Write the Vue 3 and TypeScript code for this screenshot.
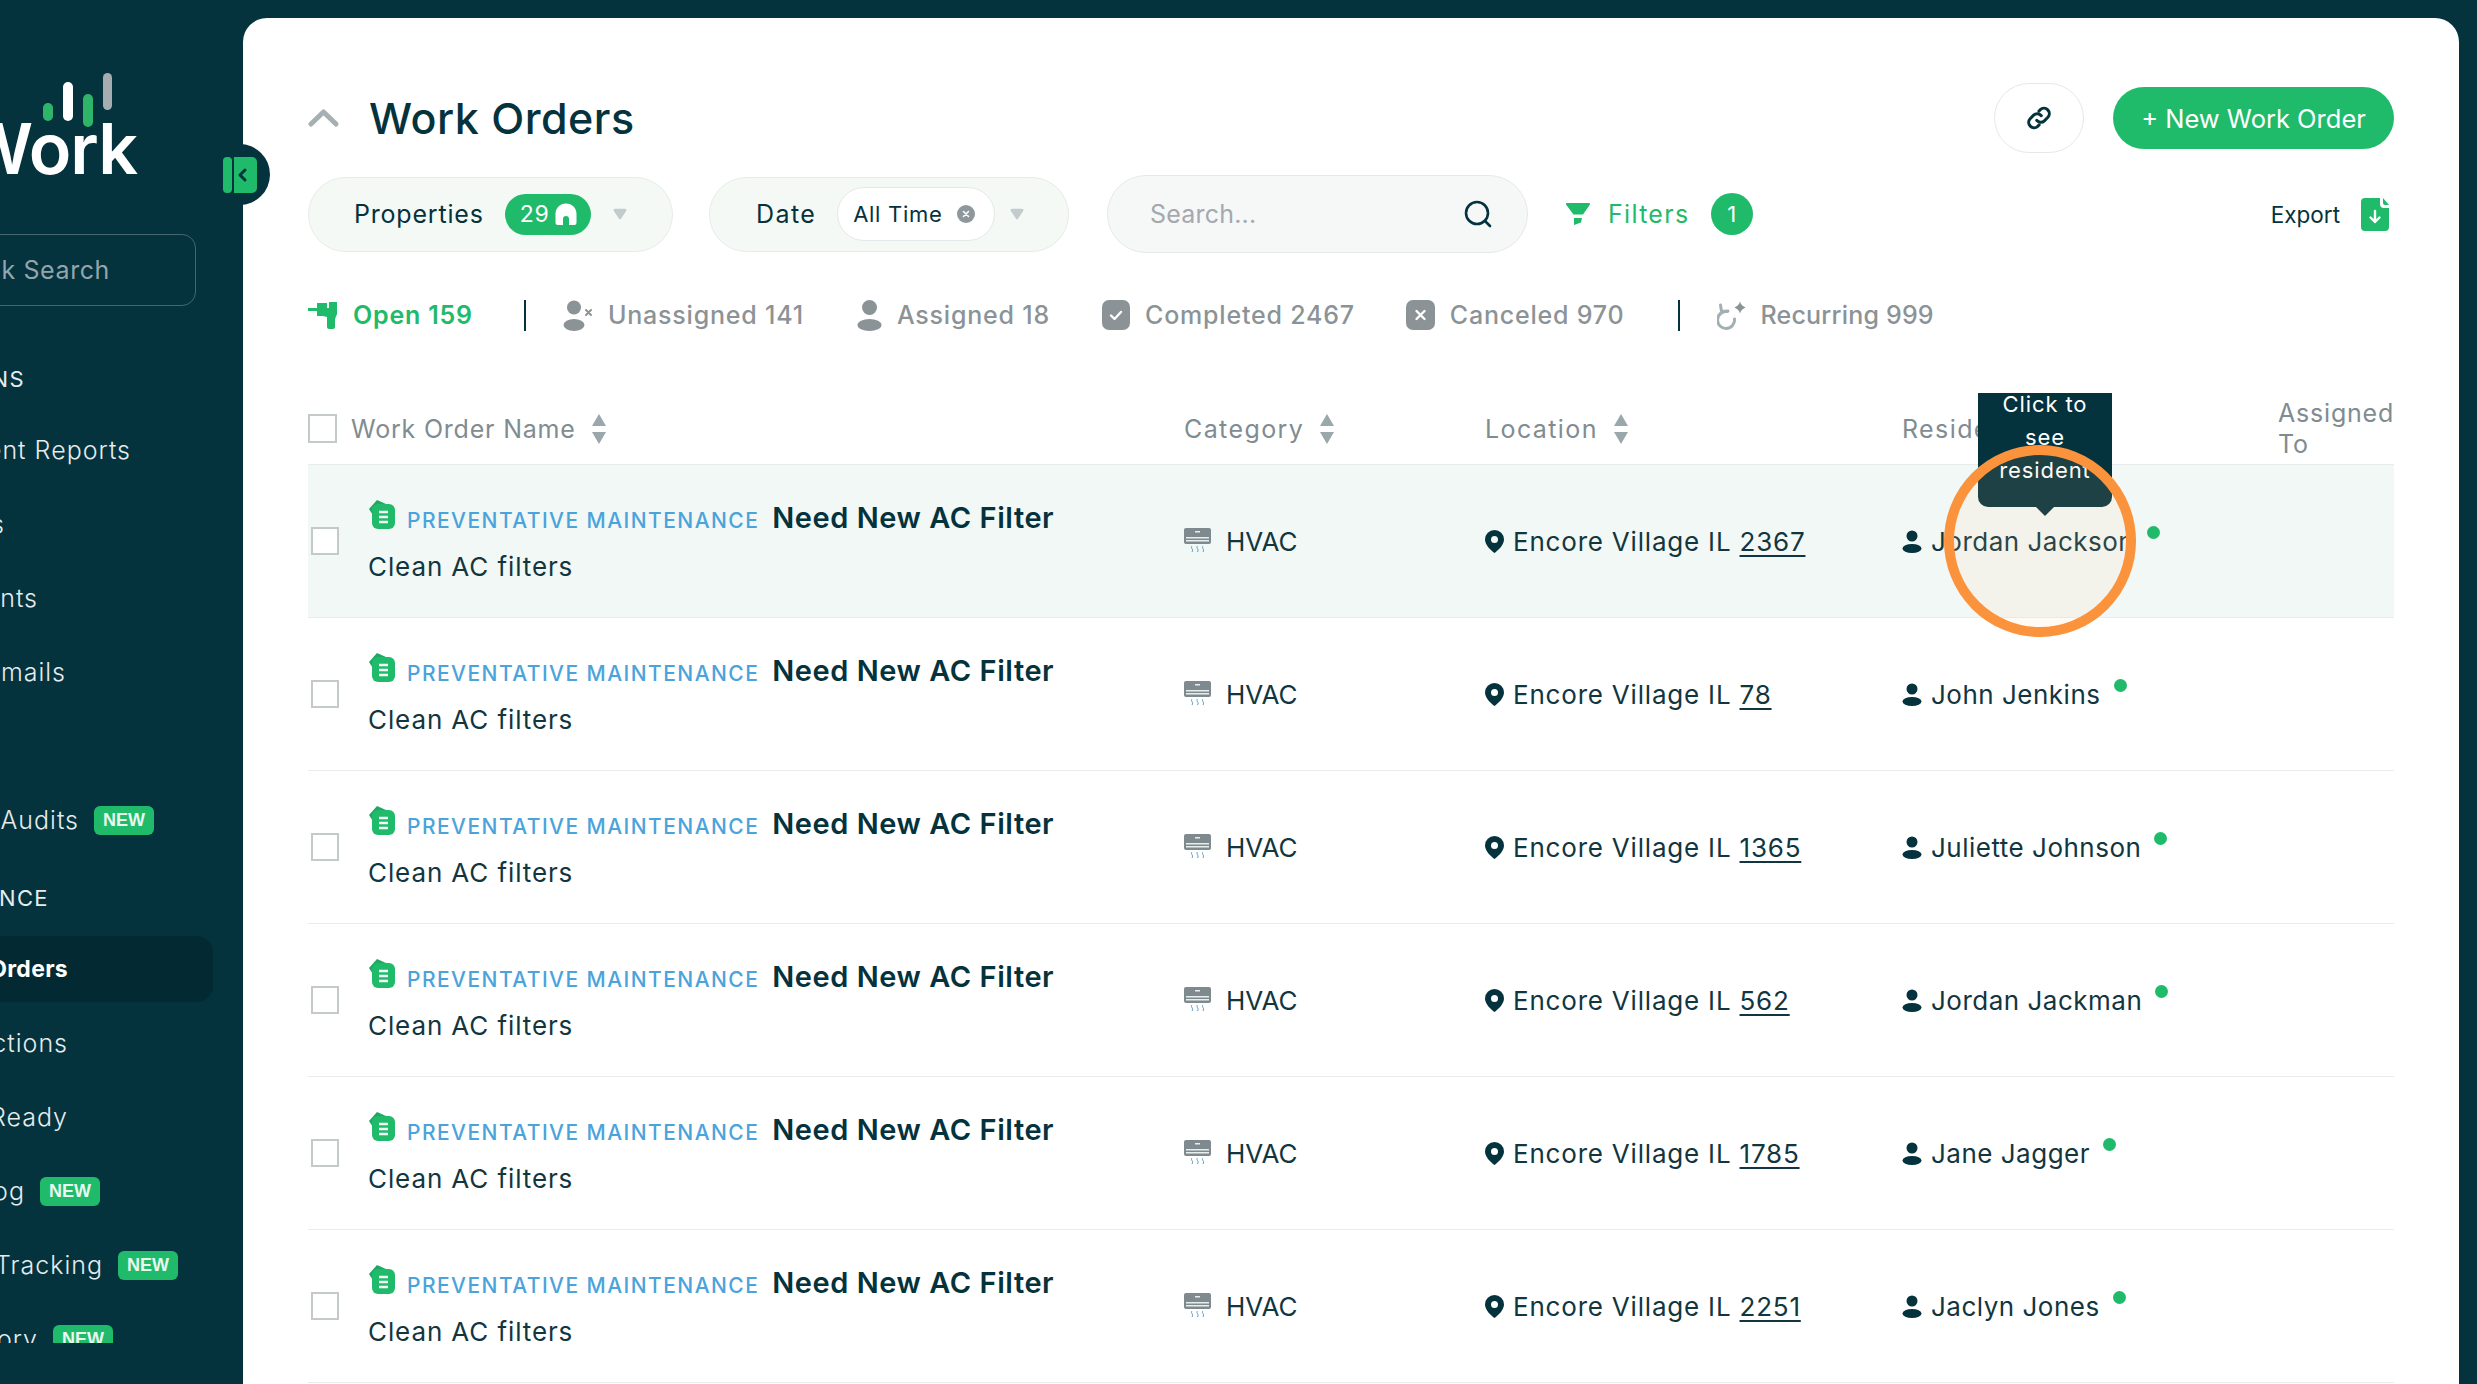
<template>
  <div class="shell">
    <aside class="sidebar">
      <div class="logo">
        <svg class="logo__bars" width="70" height="54" viewBox="0 0 70 54">
          <rect x="0" y="30" width="10" height="18" rx="5" fill="#2fb56a" />
          <rect x="20" y="9" width="10" height="39" rx="5" fill="#fff" />
          <rect x="40" y="21" width="10" height="33" rx="5" fill="#2fb56a" />
          <rect x="60" y="0" width="9" height="37" rx="4.5" fill="#a5adb1" />
        </svg>
        <div class="logo__word">Work</div>
      </div>

      <div class="quick">
        <span>Quick Search</span>
      </div>

      <nav class="nav">
        <template v-for="item in NAV" :key="item.label">
          <div v-if="item.spacer" class="nav__spacer" />
          <div
            class="nav__item"
            :class="{ 'nav__item--head': item.head, 'nav__item--active': item.active }"
          >
            <div class="nav__clip" :style="{ width: item.end + 'px' }">
              <span>{{ item.label }}</span>
            </div>
            <span v-if="item.isNew" class="nav__new">NEW</span>
          </div>
        </template>
      </nav>
    </aside>

    <!-- collapse toggle sits half over the card -->
    <div class="collapse">
      <svg width="34" height="36" viewBox="0 0 34 36">
        <rect x="0" y="0" width="9" height="36" rx="4" fill="#1fbb6a" />
        <path d="M11 0h18a5 5 0 0 1 5 5v26a5 5 0 0 1-5 5H11z" fill="#1fbb6a" />
        <path d="M22 13l-5 5 5 5" fill="none" stroke="#04323d" stroke-width="3" stroke-linecap="round" stroke-linejoin="round" />
      </svg>
    </div>

    <main class="card">
      <header class="title-row">
        <svg class="title-row__chev" width="31" height="18" viewBox="0 0 31 18">
          <path d="M3 15L15.5 3 28 15" fill="none" stroke="#a6afb2" stroke-width="5" stroke-linecap="round" stroke-linejoin="round" />
        </svg>
        <h1>Work Orders</h1>
        <button class="link-btn">
          <svg width="28" height="28" viewBox="0 0 24 24" fill="none" stroke="#04323d" stroke-width="2.6" stroke-linecap="round" stroke-linejoin="round">
            <path d="M10 14a4.5 4.5 0 0 0 6.6.4l3-3a4.6 4.6 0 0 0-6.5-6.5l-1.2 1.2" />
            <path d="M14 10a4.5 4.5 0 0 0-6.6-.4l-3 3a4.6 4.6 0 0 0 6.5 6.5l1.2-1.2" />
          </svg>
        </button>
        <button class="new-btn">+ New Work Order</button>
      </header>

      <div class="toolbar">
        <div class="pill pill--props">
          <span>Properties</span>
          <span class="count">
            29
            <svg width="24" height="24" viewBox="0 0 24 24"><path d="M12 1.500C6 1.500 1.500 6 1.500 12v8.500a2.500 2.500 0 0 0 2.500 2.500H9v-6a3 3 0 0 1 6 0v6h5a2.500 2.500 0 0 0 2.500-2.500V12C22.500 6 18 1.500 12 1.500z" fill="#fff" /></svg>
          </span>
          <svg class="caret" width="14" height="12" viewBox="0 0 16 14"><path d="M2 1h12a1.500 1.500 0 0 1 1.200 2.400L9.200 12.500a1.500 1.500 0 0 1-2.400 0L.8 3.400A1.500 1.500 0 0 1 2 1z" fill="#c3cccc" /></svg>
        </div>
        <div class="pill pill--date">
          <span>Date</span>
          <span class="chip">
            All Time
            <svg width="18" height="18" viewBox="0 0 18 18"><circle cx="9" cy="9" r="9" fill="#8e989c" /><path d="M6.500 6.500l5 5M11.500 6.500l-5 5" stroke="#fff" stroke-width="1.600" stroke-linecap="round" /></svg>
          </span>
          <svg class="caret" width="14" height="12" viewBox="0 0 16 14"><path d="M2 1h12a1.500 1.500 0 0 1 1.200 2.400L9.200 12.500a1.500 1.500 0 0 1-2.400 0L.8 3.400A1.500 1.500 0 0 1 2 1z" fill="#c3cccc" /></svg>
        </div>
        <div class="search">
          <span>Search...</span>
          <svg width="32" height="32" viewBox="0 0 32 32" fill="none" stroke="#04323d" stroke-width="2.600" stroke-linecap="round"><circle cx="15" cy="15" r="11" /><path d="M23 23l5 5" /></svg>
        </div>
        <div class="filters">
          <svg width="26" height="24" viewBox="0 0 26 24" fill="#1fbb6a"><path d="M2 1h22c1 0 1.400 1 .8 1.700L18 12.500H8.500L1.200 2.700C.6 2 1 1 2 1z" /><path d="M9 16h8l-1 4.500-7 2.500z" /></svg>
          <span>Filters</span>
          <span class="filters__n">1</span>
        </div>
        <div class="export">
          <span>Export</span>
          <svg width="28" height="33" viewBox="0 0 28 33"><path d="M4 0h15v6a4 4 0 0 0 4 4h5v19a4 4 0 0 1-4 4H4a4 4 0 0 1-4-4V4a4 4 0 0 1 4-4z" fill="#1fbb6a" /><path d="M22 0l6 7h-4a2 2 0 0 1-2-2z" fill="#1fbb6a" /><path d="M14 13v11M9.500 19.500L14 24l4.500-4.500" fill="none" stroke="#fff" stroke-width="2.400" stroke-linecap="round" stroke-linejoin="round" /></svg>
        </div>
      </div>

      <div class="tabs">
        <div class="tab tab--open">
          <svg width="30" height="30" viewBox="0 0 30 30" fill="#1fbb6a"><rect x="0" y="8" width="10" height="3" /><path d="M9 3h10v5h2V2h8v12l-2 5v8a2 2 0 0 1-2 2h-4a2 2 0 0 1-2-2V17l-4-1H9z" /></svg>
          <span>Open 159</span>
        </div>
        <i class="tabs__sep" />
        <div class="tab tab--unassigned">
          <svg width="30" height="32" viewBox="0 0 30 32"><circle cx="11" cy="8.500" r="7" fill="#8b9396" /><ellipse cx="11" cy="26" rx="10.500" ry="6" fill="#8b9396" /><path d="M23 11l5 5M28 11l-5 5" stroke="#8b9396" stroke-width="2" stroke-linecap="round" /></svg>
          <span>Unassigned 141</span>
        </div>
        <div class="tab tab--assigned">
          <svg width="25" height="32" viewBox="0 0 25 32"><circle cx="12.500" cy="8.500" r="7.500" fill="#8b9396" /><ellipse cx="12.500" cy="26" rx="12" ry="6" fill="#8b9396" /></svg>
          <span>Assigned 18</span>
        </div>
        <div class="tab tab--completed">
          <svg width="28" height="30" viewBox="0 0 28 30"><rect width="28" height="30" rx="7" fill="#8b9396" /><path d="M9 15.500l3.500 3.500 6.500-7" fill="none" stroke="#fff" stroke-width="2.400" stroke-linecap="round" stroke-linejoin="round" /></svg>
          <span>Completed 2467</span>
        </div>
        <div class="tab tab--canceled">
          <svg width="29" height="30" viewBox="0 0 29 30"><rect width="29" height="30" rx="7" fill="#8b9396" /><path d="M10.500 11l8 8M18.500 11l-8 8" stroke="#fff" stroke-width="2.400" stroke-linecap="round" /></svg>
          <span>Canceled 970</span>
        </div>
        <i class="tabs__sep tabs__sep--2" />
        <div class="tab tab--recurring">
          <svg width="29" height="30" viewBox="0 0 29 30" fill="none"><path d="M10 11.500A8.500 8.500 0 1 0 17.500 19" stroke="#a3b0b3" stroke-width="3" stroke-linecap="round" /><path d="M3.500 5l1 6.500 6.500-.5" stroke="#a3b0b3" stroke-width="3" stroke-linecap="round" stroke-linejoin="round" /><path d="M23 1.500c.8 2.800 2.200 4.600 5.500 6-3.300 1.400-4.700 3.200-5.500 6-.8-2.800-2.200-4.600-5.500-6 3.300-1.400 4.700-3.200 5.500-6z" fill="#8b9396" /></svg>
          <span>Recurring 999</span>
        </div>
      </div>

      <section class="table">
        <div class="grid head">
          <div class="head__name">
            <span class="box box--head" />
            <span>Work Order Name</span>
            <svg class="sort" width="14" height="30" viewBox="0 0 14 30"><path d="M7 0l7 12H0zM7 30l7-12H0z" fill="#9aa7ab" /></svg>
          </div>
          <div class="head__cell head__cell--wide">
            <span>Category</span>
            <svg class="sort" width="14" height="30" viewBox="0 0 14 30"><path d="M7 0l7 12H0zM7 30l7-12H0z" fill="#9aa7ab" /></svg>
          </div>
          <div class="head__cell head__cell--wide">
            <span>Location</span>
            <svg class="sort" width="14" height="30" viewBox="0 0 14 30"><path d="M7 0l7 12H0zM7 30l7-12H0z" fill="#9aa7ab" /></svg>
          </div>
          <div class="head__cell head__cell--wide">Resident</div>
          <div class="head__cell head__cell--wrap">Assigned To</div>
        </div>

        <div v-for="(row, i) in ROWS" :key="row.unit" class="grid row" :class="{ 'row--hover': i === 0 }">
          <div class="row__name">
            <span class="box" />
            <div class="row__text">
              <div class="row__top">
                <svg class="row__icon" width="27" height="30" viewBox="0 0 27 30">
                  <path d="M1 10L9 1l9 4-10 16z" fill="#1fa862" />
                  <rect x="4" y="5" width="23" height="25" rx="6" fill="#1fbb6a" />
                  <path d="M11 13h9M11 18h9M11 23h9" stroke="#f2f8f5" stroke-width="2.400" />
                </svg>
                <span class="row__kind">PREVENTATIVE MAINTENANCE</span>
                <span class="row__title">Need New AC Filter</span>
              </div>
              <div class="row__desc">Clean AC filters</div>
            </div>
          </div>
          <div class="row__cell row__cell--cat">
            <svg class="row__hvac" width="27" height="26" viewBox="0 0 27 26">
              <rect width="27" height="16" rx="2" fill="#7f8a8e" />
              <rect x="2" y="9" width="23" height="1.500" fill="#e8eded" />
              <rect x="2" y="12" width="23" height="1.500" fill="#e8eded" />
              <rect x="11" y="3" width="5" height="1.500" fill="#e8eded" />
              <path d="M8 18c-2 2 2 3 0 6M13.500 18c-2 2 2 3 0 6M19 18c-2 2 2 3 0 6" fill="none" stroke="#5d9dc4" stroke-width="1" />
            </svg>
            <span>HVAC</span>
          </div>
          <div class="row__cell row__cell--loc">
            <svg width="19" height="23" viewBox="0 0 19 23"><path fill-rule="evenodd" d="M9.500 0A9.500 9.500 0 0 0 0 9.500C0 15 6 20.500 9.500 23 13 20.500 19 15 19 9.500A9.500 9.500 0 0 0 9.500 0zm0 6a3.500 3.500 0 1 1 0 7 3.500 3.500 0 0 1 0-7z" fill="#04323d" /></svg>
            <span>Encore Village IL <u>{{ row.unit }}</u></span>
          </div>
          <div class="row__cell row__cell--res">
            <svg width="20" height="23" viewBox="0 0 20 23"><circle cx="10" cy="6" r="5.500" fill="#04323d" /><ellipse cx="10" cy="18.500" rx="9.500" ry="4.500" fill="#04323d" /></svg>
            <span>{{ row.resident }}</span>
            <i class="row__dot" />
          </div>
          <div />
        </div>

        <!-- hover tooltip and the tutorial's highlight ring -->
        <div class="tip">
          <div class="tip__body">
            <p>Click to see resident</p>
          </div>
          <i class="tip__arrow" />
        </div>
        <div class="ring" />
      </section>
    </main>
  </div>
</template>

<script setup lang="ts">
interface NavItem {
  label: string
  end: number // x where the label ends, the sidebar is scrolled so the start is cut off
  head?: boolean
  active?: boolean
  isNew?: boolean
  spacer?: boolean
}

const NAV: NavItem[] = [
  { label: 'OPERATIONS', end: 25, head: true },
  { label: 'Incident Reports', end: 131 },
  { label: 'Tasks', end: 5 },
  { label: 'Residents', end: 38 },
  { label: 'Emails', end: 66 },
  { label: 'Property Audits', end: 79, isNew: true, spacer: true },
  { label: 'MAINTENANCE', end: 49, head: true },
  { label: 'Work Orders', end: 68, active: true },
  { label: 'Inspections', end: 68 },
  { label: 'Make Ready', end: 68 },
  { label: 'Work Log', end: 25, isNew: true },
  { label: 'Time Tracking', end: 103, isNew: true },
  { label: 'Inventory', end: 38, isNew: true },
]

const ROWS = [
  { unit: '2367', resident: 'Jordan Jackson' },
  { unit: '78', resident: 'John Jenkins' },
  { unit: '1365', resident: 'Juliette Johnson' },
  { unit: '562', resident: 'Jordan Jackman' },
  { unit: '1785', resident: 'Jane Jagger' },
  { unit: '2251', resident: 'Jaclyn Jones' },
]
</script>

<style>
html, body {
  margin: 0;
  height: 1384px;
  overflow: hidden;
  background: #04323d;
}
</style>

<style scoped>
.shell {
  position: relative;
  display: flex;
  width: 2477px;
  height: 1384px;
  overflow: hidden;
  background: #04323d;
  font-family: Inter, "Noto Sans", sans-serif;
  color: #04323d;
}

/* sidebar */
.sidebar {
  flex: 0 0 243px;
  width: 243px;
  overflow: hidden;
}
.logo {
  display: flex;
  flex-direction: column;
  padding-top: 73px;
}
.logo__bars { margin-left: 43px; }
.logo__word {
  display: flex;
  justify-content: flex-end;
  width: 137px;
  margin-top: -11px;
  font-size: 70px;
  line-height: 66px;
  font-weight: 600;
  letter-spacing: -1px;
  color: #fff;
  white-space: nowrap;
}
.quick {
  display: flex;
  justify-content: flex-end;
  align-items: center;
  box-sizing: border-box;
  width: 216px;
  height: 72px;
  margin: 52px 0 0 -20px;
  padding-right: 85px;
  border: 1px solid #47676e;
  border-radius: 14px;
  font-size: 25px;
  letter-spacing: 0.6px;
  color: #93a5aa;
  white-space: nowrap;
}
.nav {
  display: flex;
  flex-direction: column;
  height: 998px;
  margin-top: 39px;
  overflow: hidden;
  color: #e4ecee;
  font-size: 25px;
  font-weight: 300;
  letter-spacing: 1px;
}
.nav__spacer { flex: 0 0 74px; }
.nav__item {
  flex: 0 0 66px;
  display: flex;
  align-items: center;
  margin: 4px 0;
  white-space: nowrap;
}
.nav__item--head {
  flex-basis: 68px;
  margin: 0;
  font-size: 22px;
  font-weight: 400;
  letter-spacing: 1.4px;
}
.nav__spacer + .nav__item { margin-bottom: 11px; }
.nav__item--active {
  width: 213px;
  border-radius: 0 16px 16px 0;
  background: #032a33;
  font-size: 23px;
  font-weight: 700;
  letter-spacing: 0.3px;
  color: #fff;
}
.nav__clip {
  display: flex;
  justify-content: flex-end;
}
.nav__new {
  box-sizing: border-box;
  width: 60px;
  margin-left: 15px;
  height: 29px;
  line-height: 29px;
  text-align: center;
  border-radius: 6px;
  background: #1fbb6a;
  color: #e9f7ef;
  font-family: "Liberation Sans", sans-serif;
  font-size: 18px;
  font-weight: 700;
  letter-spacing: 0;
}

.collapse {
  position: absolute;
  left: 209px;
  top: 144px;
  z-index: 3;
  display: flex;
  align-items: center;
  justify-content: center;
  box-sizing: border-box;
  width: 61px;
  height: 61px;
  border-radius: 50%;
  background: #04323d;
}

/* card */
.card {
  flex: 0 0 2216px;
  box-sizing: border-box;
  width: 2216px;
  height: 1366px;
  margin-top: 18px;
  padding: 65px 65px 0;
  border-radius: 24px 24px 0 0;
  background: #fff;
  overflow: hidden;
}
.title-row {
  display: flex;
  align-items: center;
  height: 70px;
}
.title-row__chev { margin-right: 30px; }
.title-row h1 {
  margin: 0;
  font-size: 43px;
  font-weight: 500;
  letter-spacing: 0.5px;
}
.link-btn {
  display: flex;
  align-items: center;
  justify-content: center;
  width: 90px;
  height: 70px;
  margin-left: auto;
  padding: 0;
  border: 1px solid #e4e8e8;
  border-radius: 35px;
  background: #fff;
}
.new-btn {
  width: 281px;
  height: 62px;
  margin-left: 29px;
  border: 0;
  border-radius: 31px;
  background: #1fbb6a;
  color: #fff;
  font: 400 25.500px Inter, sans-serif;
}

.toolbar {
  display: flex;
  align-items: center;
  height: 78px;
  margin-top: 22px;
}
.pill {
  display: flex;
  align-items: center;
  box-sizing: border-box;
  height: 75px;
  border: 1px solid #e3ece8;
  border-radius: 38px;
  background: #f4f9f6;
  font-size: 25px;
  letter-spacing: 0.8px;
}
.pill--props {
  width: 365px;
  padding-left: 45px;
}
.count {
  display: flex;
  align-items: center;
  justify-content: space-between;
  box-sizing: border-box;
  width: 86px;
  height: 41px;
  margin-left: 21px;
  padding: 0 13px 0 15px;
  border-radius: 21px;
  background: #1fbb6a;
  color: #fff;
  font-size: 23px;
}
.caret { margin-left: 22px; }
.pill--date {
  width: 360px;
  margin-left: 36px;
  padding-left: 46px;
  letter-spacing: 1.4px;
}
.chip {
  display: flex;
  align-items: center;
  justify-content: space-between;
  box-sizing: border-box;
  width: 158px;
  height: 54px;
  margin-left: 21px;
  padding: 0 19px 0 15px;
  border: 1px solid #e4e8e8;
  border-radius: 27px;
  background: #fff;
  font-size: 22px;
  letter-spacing: 0.7px;
}
.pill--date .caret { margin-left: 15px; }
.search {
  display: flex;
  align-items: center;
  justify-content: space-between;
  box-sizing: border-box;
  width: 421px;
  height: 78px;
  margin-left: 38px;
  padding: 0 33px 0 42px;
  border: 1px solid #e6e8e8;
  border-radius: 39px;
  background: #f6f7f7;
  color: #a3a9ae;
  font-size: 25px;
  letter-spacing: 0.2px;
}
.filters {
  display: flex;
  align-items: center;
  margin-left: 37px;
  color: #1fbb6a;
  font-size: 25px;
  letter-spacing: 1.3px;
}
.filters > span:first-of-type { margin-left: 17px; }
.filters__n {
  display: flex;
  align-items: center;
  justify-content: center;
  width: 42px;
  height: 42px;
  margin-left: 22px;
  border-radius: 50%;
  background: #1fbb6a;
  color: #fff;
  font-size: 22px;
}
.export {
  display: flex;
  align-items: center;
  gap: 21px;
  margin-left: auto;
  margin-right: 5px;
  font-size: 22.500px;
}

.tabs {
  display: flex;
  align-items: center;
  height: 34px;
  margin-top: 45px;
  color: #8b9396;
  font-size: 25px;
  font-weight: 500;
  letter-spacing: 0.8px;
}
.tab {
  display: flex;
  align-items: center;
  gap: 15px;
  white-space: nowrap;
}
.tab--open { color: #1fbb6a; font-weight: 600; }
.tabs__sep {
  width: 2px;
  height: 31px;
  margin-left: 51px;
  background: #04323d;
}
.tab--unassigned { margin-left: 37px; }
.tab--assigned { margin-left: 53px; }
.tab--completed { margin-left: 52px; }
.tab--canceled { margin-left: 51px; }
.tabs__sep--2 { margin-left: 53px; }
.tab--recurring { margin-left: 37px; letter-spacing: 0.2px; }

/* table */
.table {
  position: relative;
  margin-top: 61px;
}
.grid {
  display: grid;
  grid-template-columns: 876px 301px 417px 376px 1fr;
  align-items: center;
}
.head {
  height: 71px;
  border-bottom: 1px solid #e8ecec;
  color: #7f8c91;
  font-size: 25px;
  letter-spacing: 0.8px;
}
.head__name, .head__cell {
  display: flex;
  align-items: center;
}
.head__name .box { margin-right: 14px; }
.head__cell--wide { letter-spacing: 1.4px; }
.sort { margin-left: 16px; }
.head__cell--wrap {
  line-height: 31px;
}
.box {
  flex: none;
  box-sizing: border-box;
  width: 28px;
  height: 28px;
  border: 2px solid #c4c9c9;
  background: #fff;
}
.box--head { width: 29px; height: 29px; }

.row {
  height: 152px;
  border-bottom: 1px solid #e8ecec;
}
.row--hover { background: #f2f8f5; }
.row__name {
  display: flex;
  align-items: center;
  padding-left: 3px;
}
.row__text { margin-left: 29px; }
.row__top {
  display: flex;
  align-items: center;
  height: 34px;
}
.row__icon { margin-top: -6px; }
.row__kind {
  margin: 7px 0 0 12px;
  color: #4ba3dc;
  font-size: 21px;
  font-weight: 500;
  letter-spacing: 1.450px;
}
.row__title {
  margin-left: 13px;
  font-size: 29px;
  font-weight: 600;
  letter-spacing: 0.550px;
}
.row__desc {
  margin-top: 17px;
  color: #12363f;
  font-size: 26px;
  letter-spacing: 0.900px;
}
.row__cell {
  display: flex;
  align-items: center;
  font-size: 26px;
  letter-spacing: 0.500px;
  color: #12363f;
}
.row__cell--cat { letter-spacing: 0; }
.row__hvac { margin-right: 15px; }
.row__cell--loc { gap: 9px; letter-spacing: 0.800px; }
.row__cell--loc u { text-underline-offset: 4px; }
.row__cell--res { gap: 9px; }
.row__dot {
  width: 13px;
  height: 13px;
  margin: -18px 0 0 4px;
  border-radius: 50%;
  background: #1fbb6a;
}

.tip {
  position: absolute;
  left: 1670px;
  top: 0;
  z-index: 2;
  width: 134px;
}
.tip__body {
  height: 114px;
  overflow: hidden;
  border-radius: 0 0 10px 10px;
  background: #04323d;
  color: #fff;
  text-align: center;
  font-size: 22px;
  line-height: 33px;
  letter-spacing: 0.9px;
}
.tip__body p { margin: -5px 12px 0; }
.tip__arrow {
  display: block;
  width: 0;
  margin: 0 auto;
  border: 9px solid transparent;
  border-top-color: #04323d;
  border-bottom: 0;
}
.ring {
  position: absolute;
  left: 1636px;
  top: 52px;
  z-index: 2;
  box-sizing: border-box;
  width: 192px;
  height: 192px;
  border: 10px solid #fb923c;
  border-radius: 50%;
  background: rgba(255, 205, 150, 0.1);
}
</style>
